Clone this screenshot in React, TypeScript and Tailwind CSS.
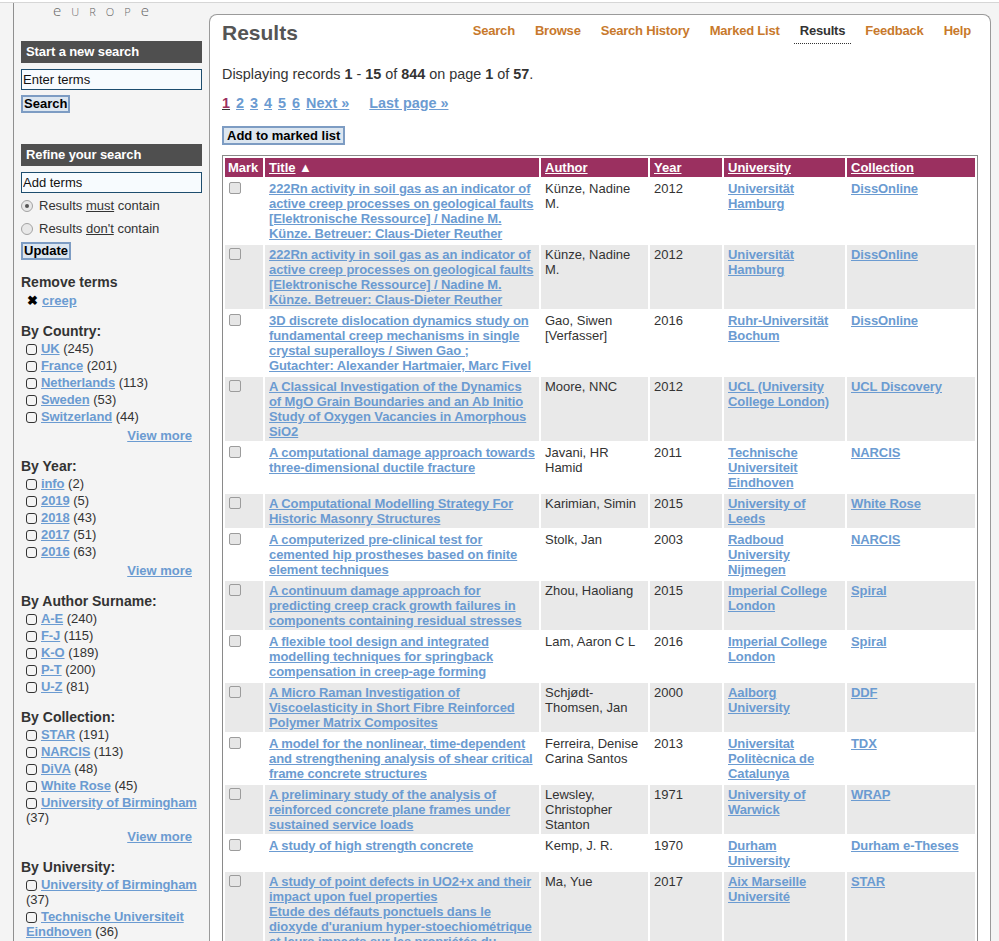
import React from 'react';

type Row = {
  title: string[];
  author: string;
  year: string;
  university: string;
  collection: string;
};

const rows: Row[] = [
  {
    title: ['222Rn activity in soil gas as an indicator of active creep processes on geological faults [Elektronische Ressource] / Nadine M. Künze. Betreuer: Claus-Dieter Reuther'],
    author: 'Künze, Nadine M.',
    year: '2012',
    university: 'Universität Hamburg',
    collection: 'DissOnline',
  },
  {
    title: ['222Rn activity in soil gas as an indicator of active creep processes on geological faults [Elektronische Ressource] / Nadine M. Künze. Betreuer: Claus-Dieter Reuther'],
    author: 'Künze, Nadine M.',
    year: '2012',
    university: 'Universität Hamburg',
    collection: 'DissOnline',
  },
  {
    title: ['3D discrete dislocation dynamics study on fundamental creep mechanisms in single crystal superalloys / Siwen Gao ; Gutachter: Alexander Hartmaier, Marc Fivel'],
    author: 'Gao, Siwen [Verfasser]',
    year: '2016',
    university: 'Ruhr-Universität Bochum',
    collection: 'DissOnline',
  },
  {
    title: ['A Classical Investigation of the Dynamics of MgO Grain Boundaries and an Ab Initio Study of Oxygen Vacancies in Amorphous SiO2'],
    author: 'Moore, NNC',
    year: '2012',
    university: 'UCL (University College London)',
    collection: 'UCL Discovery',
  },
  {
    title: ['A computational damage approach towards three-dimensional ductile fracture'],
    author: 'Javani, HR Hamid',
    year: '2011',
    university: 'Technische Universiteit Eindhoven',
    collection: 'NARCIS',
  },
  {
    title: ['A Computational Modelling Strategy For Historic Masonry Structures'],
    author: 'Karimian, Simin',
    year: '2015',
    university: 'University of Leeds',
    collection: 'White Rose',
  },
  {
    title: ['A computerized pre-clinical test for cemented hip prostheses based on finite element techniques'],
    author: 'Stolk, Jan',
    year: '2003',
    university: 'Radboud University Nijmegen',
    collection: 'NARCIS',
  },
  {
    title: ['A continuum damage approach for predicting creep crack growth failures in components containing residual stresses'],
    author: 'Zhou, Haoliang',
    year: '2015',
    university: 'Imperial College London',
    collection: 'Spiral',
  },
  {
    title: ['A flexible tool design and integrated modelling techniques for springback compensation in creep-age forming'],
    author: 'Lam, Aaron C L',
    year: '2016',
    university: 'Imperial College London',
    collection: 'Spiral',
  },
  {
    title: ['A Micro Raman Investigation of Viscoelasticity in Short Fibre Reinforced Polymer Matrix Composites'],
    author: 'Schjødt-Thomsen, Jan',
    year: '2000',
    university: 'Aalborg University',
    collection: 'DDF',
  },
  {
    title: ['A model for the nonlinear, time-dependent and strengthening analysis of shear critical frame concrete structures'],
    author: 'Ferreira, Denise Carina Santos',
    year: '2013',
    university: 'Universitat Politècnica de Catalunya',
    collection: 'TDX',
  },
  {
    title: ['A preliminary study of the analysis of reinforced concrete plane frames under sustained service loads'],
    author: 'Lewsley, Christopher Stanton',
    year: '1971',
    university: 'University of Warwick',
    collection: 'WRAP',
  },
  {
    title: ['A study of high strength concrete'],
    author: 'Kemp, J. R.',
    year: '1970',
    university: 'Durham University',
    collection: 'Durham e-Theses',
  },
  {
    title: [
      'A study of point defects in UO2+x and their impact upon fuel properties',
      'Etude des défauts ponctuels dans le dioxyde d\'uranium hyper-stoechiométrique et leurs impacts sur les propriétés du combustible',
    ],
    author: 'Ma, Yue',
    year: '2017',
    university: 'Aix Marseille Université',
    collection: 'STAR',
  },
];

type Facet = { title: string; items: [string, string][]; more: boolean };

const facets: Facet[] = [
  {
    title: 'By Country:',
    items: [['UK', '245'], ['France', '201'], ['Netherlands', '113'], ['Sweden', '53'], ['Switzerland', '44']],
    more: true,
  },
  {
    title: 'By Year:',
    items: [['info', '2'], ['2019', '5'], ['2018', '43'], ['2017', '51'], ['2016', '63']],
    more: true,
  },
  {
    title: 'By Author Surname:',
    items: [['A-E', '240'], ['F-J', '115'], ['K-O', '189'], ['P-T', '200'], ['U-Z', '81']],
    more: false,
  },
  {
    title: 'By Collection:',
    items: [['STAR', '191'], ['NARCIS', '113'], ['DiVA', '48'], ['White Rose', '45'], ['University of Birmingham', '37']],
    more: true,
  },
  {
    title: 'By University:',
    items: [['University of Birmingham', '37'], ['Technische Universiteit Eindhoven', '36']],
    more: false,
  },
];

const navItems = ['Search', 'Browse', 'Search History', 'Marked List', 'Results', 'Feedback', 'Help'];

// Windows-ish grey checkbox used in the results table
function GreyCheck() {
  return <span className="mt-px block h-[12px] w-[12px] rounded-[2px] border border-[#9c9c9c] bg-[#e6e6e6]" />;
}

function Radio({ checked }: { checked?: boolean }) {
  return (
    <span className="flex h-[12px] w-[12px] items-center justify-center rounded-full border border-[#a3a3a3] bg-[#e8e8e8]">
      {checked && <span className="h-[4px] w-[4px] rounded-full bg-[#555]" />}
    </span>
  );
}

function Sidebar() {
  return (
    <aside className="w-[196px] shrink-0 border-l border-[#8f8f8f] px-[7px] text-[13px] text-[#333]">
      {/* logo remnant */}
      <div className="h-[38px]">
        <div className="ml-[32px] flex w-[96px] justify-between font-['Open_Sans',sans-serif] text-[15px] font-light leading-[15px] text-[#666]">
          <span>e</span>
          <span className="[font-variant:small-caps]">u</span>
          <span className="[font-variant:small-caps]">r</span>
          <span className="[font-variant:small-caps]">o</span>
          <span className="[font-variant:small-caps]">p</span>
          <span>e</span>
        </div>
      </div>

      <div className="h-[22px] bg-[#4f4f4f] pl-[5px] text-[13px] font-bold leading-[22px] tracking-[-0.1px] text-white">Start a new search</div>
      <input
        readOnly
        value="Enter terms"
        className="mt-[6px] block h-[21px] w-full border border-[#1d4d6e] bg-[#f7fbfe] px-[1px] text-[13px] text-[#111] outline-none"
      />
      <button className="mt-[5px] block h-[18px] border-2 border-[#7d9cc3] bg-[#dce6f0] px-[1px] text-[13px] font-bold leading-[14px] text-black">
        Search
      </button>

      <div className="mt-[31px] h-[22px] bg-[#4f4f4f] pl-[5px] text-[13px] font-bold leading-[22px] tracking-[-0.1px] text-white">Refine your search</div>
      <input
        readOnly
        value="Add terms"
        className="mt-[6px] block h-[21px] w-full border border-[#1d4d6e] bg-[#f7fbfe] px-[1px] text-[13px] text-[#111] outline-none"
      />
      <div className="mt-[1px]">
        <div className="flex h-[23px] items-center gap-[6px]">
          <Radio checked />
          <span>
            Results <span className="underline">must</span> contain
          </span>
        </div>
        <div className="flex h-[23px] items-center gap-[6px]">
          <Radio />
          <span>
            Results <span className="underline">don't</span> contain
          </span>
        </div>
      </div>
      <button className="mt-[2px] block h-[18px] border-2 border-[#7d9cc3] bg-[#dce6f0] px-[1px] text-[13px] font-bold leading-[14px] text-black">
        Update
      </button>

      <div className="mt-[14px] text-[14px] font-bold leading-[17px]">Remove terms</div>
      <div className="mt-[1px] pl-[6px] leading-[17px]">
        <span className="mr-[4px] text-[13px] font-bold text-black">✖</span>
        <a className="font-bold text-[#6b9bd1] underline">creep</a>
      </div>

      <div className="mt-[4px]">
        {facets.map((f) => (
          <div key={f.title} className="mt-[14px]">
            <div className="text-[14px] font-bold leading-[17px]">{f.title}</div>
            {f.items.map(([name, count]) => (
              <div key={name} className="py-px pl-[5px] leading-[15px]">
                <span className="mr-[4px] inline-block h-[11px] w-[11px] rounded-[3px] border border-[#333] align-[-2px]" />
                <a className="font-bold tracking-[-0.1px] text-[#6b9bd1] underline">{name}</a> ({count})
              </div>
            ))}
            {f.more && (
              <div className="mt-[2px] pr-[10px] text-right font-bold leading-[17px]">
                <a className="text-[#6b9bd1] underline">View more</a>
              </div>
            )}
          </div>
        ))}
      </div>
    </aside>
  );
}

function ResultsTable() {
  return (
    <table className="mt-[10px] w-[756px] table-fixed border-separate border-spacing-[2px] border border-[#8a8a8a] text-[13px] leading-[15px]">
      <thead>
        <tr className="text-left text-white">
          <th className="h-[19px] w-[38px] bg-[#9b3060] px-[3px] align-middle font-bold">Mark</th>
          <th className="h-[19px] w-[274px] bg-[#9b3060] px-[4px] align-middle font-bold">
            <a className="underline">Title</a> ▲
          </th>
          <th className="h-[19px] w-[107px] bg-[#9b3060] px-[4px] align-middle font-bold">
            <a className="underline">Author</a>
          </th>
          <th className="h-[19px] w-[72px] bg-[#9b3060] px-[4px] align-middle font-bold">
            <a className="underline">Year</a>
          </th>
          <th className="h-[19px] w-[121px] bg-[#9b3060] px-[4px] align-middle font-bold">
            <a className="underline">University</a>
          </th>
          <th className="h-[19px] w-[128px] bg-[#9b3060] px-[4px] align-middle font-bold">
            <a className="underline">Collection</a>
          </th>
        </tr>
      </thead>
      <tbody>
        {rows.map((r, i) => {
          const bg = i % 2 === 1 ? 'bg-[#e9e9e9]' : 'bg-white';
          return (
            <tr key={i}>
              <td className={`${bg} px-[4px] py-[2px] align-top`}>
                <GreyCheck />
              </td>
              <td className={`${bg} py-[2px] pl-[4px] pr-[3px] align-top`}>
                <a className="font-bold tracking-[-0.1px] text-[#6b9bd1] underline">
                  {r.title.map((t, j) => (
                    <React.Fragment key={j}>
                      {j > 0 && <br />}
                      {t}
                    </React.Fragment>
                  ))}
                </a>
              </td>
              <td className={`${bg} px-[4px] py-[2px] align-top text-[#333]`}>{r.author}</td>
              <td className={`${bg} px-[4px] py-[2px] align-top text-[#333]`}>{r.year}</td>
              <td className={`${bg} px-[4px] py-[2px] align-top`}>
                <a className="font-bold tracking-[-0.1px] text-[#6b9bd1] underline">{r.university}</a>
              </td>
              <td className={`${bg} px-[4px] py-[2px] align-top`}>
                <a className="font-bold tracking-[-0.1px] text-[#6b9bd1] underline">{r.collection}</a>
              </td>
            </tr>
          );
        })}
      </tbody>
    </table>
  );
}

export default function App() {
  return (
    <div className="h-[941px] overflow-hidden bg-[#f4f4f4] font-['Liberation_Sans',Arial,Helvetica,sans-serif] text-[#333]">
      <div className="h-[3px] border-b border-[#d6d6d6] bg-white" />
      <div className="flex pl-[13px]">
        <Sidebar />

        <main className="mt-[11px] min-h-[1000px] w-[782px] shrink-0 rounded-t-[8px] border border-b-0 border-[#9a9a9a] bg-white pl-[12px] pr-[11px] pt-[5px]">
          <div className="flex items-start justify-between">
            <h1 className="text-[21px] font-bold leading-[26px] text-[#555]">Results</h1>
            <nav className="mt-[3px] flex gap-5 pr-[8px] text-[13px] font-bold leading-[15px] tracking-[-0.2px]">
              {navItems.map((n) =>
                n === 'Results' ? (
                  <span key={n} className="-mx-[6px] border-b border-dotted border-[#333] px-[6px] pb-[5px] text-[#333]">
                    {n}
                  </span>
                ) : (
                  <a key={n} className="text-[#c8792c]">
                    {n}
                  </a>
                ),
              )}
            </nav>
          </div>

          <p className="mt-[20px] text-[14.4px] leading-[17px] text-[#333]">
            Displaying records <b>1</b> - <b>15</b> of <b>844</b> on page <b>1</b> of <b>57</b>.
          </p>

          <div className="mt-[12px] flex gap-[6px] text-[14.4px] font-bold leading-[17px] text-[#6b9bd1]">
            <span className="text-[#9b3060] underline decoration-[#333]">1</span>
            <a className="underline">2</a>
            <a className="underline">3</a>
            <a className="underline">4</a>
            <a className="underline">5</a>
            <a className="underline">6</a>
            <a className="underline">Next »</a>
            <a className="ml-[14px] underline">Last page »</a>
          </div>

          <button className="mt-[14px] block h-[19px] border-2 border-[#7d9cc3] bg-[#dce6f0] px-[3px] text-[13px] font-bold leading-[15px] text-black">
            Add to marked list
          </button>

          <ResultsTable />
        </main>
      </div>
    </div>
  );
}
